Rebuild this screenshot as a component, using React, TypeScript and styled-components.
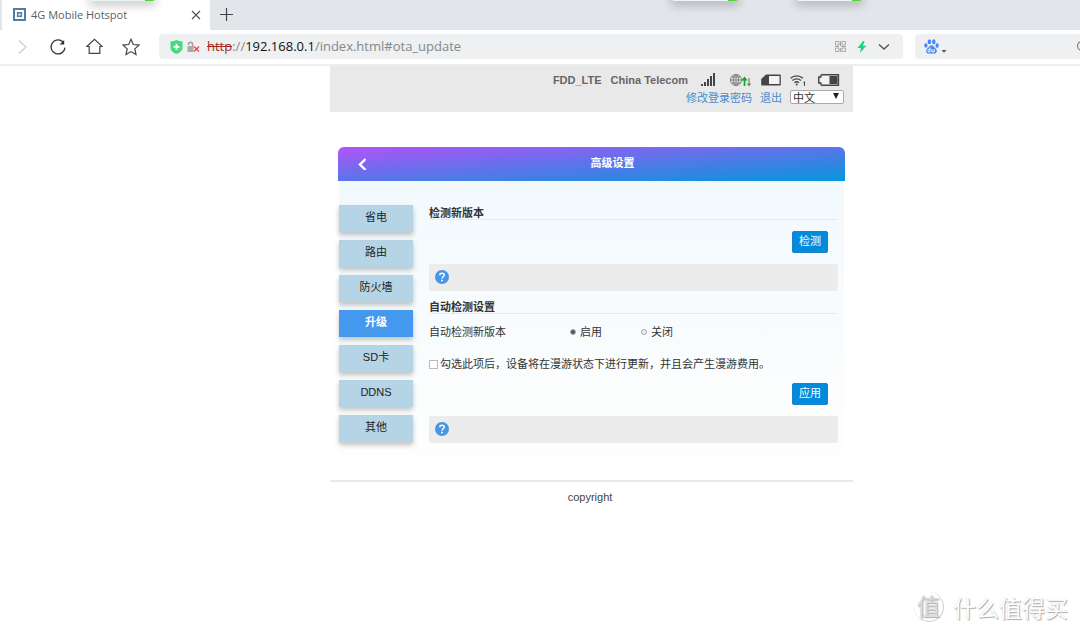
import React, { useState } from "react";
import styled, { createGlobalStyle } from "styled-components";

const Global = createGlobalStyle`
  * { box-sizing: border-box; }
  body {
    margin: 0;
    background: #fff;
    color: #333;
    font: 11px/15px "Liberation Sans", "Noto Sans CJK SC", sans-serif;
    overflow-x: hidden;
  }
  button, input, select { font: inherit; color: inherit; margin: 0; padding: 0; }
  button { cursor: pointer; }
  svg { display: block; flex: none; }
`;

const chromeFont = `"Open Sans", "Noto Sans", sans-serif`;

const Screen = styled.div`
  position: relative;
  min-height: 100vh;
  overflow: hidden;
`;

/* Browser chrome */
const TabStrip = styled.div`
  position: relative;
  display: flex;
  height: 30px;
  padding-left: 2px;
  background: #e2e6eb;
`;

const Tab = styled.div`
  display: flex;
  align-items: center;
  width: 208px;
  padding: 0 9px 1px 11px;
  background: #fff;
  font: 11px/16px ${chromeFont};
  color: #5a5f66;
`;

const TabTitle = styled.span`
  flex: 1;
  margin-left: 5px;
  white-space: nowrap;
`;

const IconButton = styled.button`
  display: flex;
  border: 0;
  background: none;
`;

const NewTab = styled(IconButton)`
  align-self: center;
  margin: 0 0 2px 10px;
`;

const Toast = styled.span<{ $left: number; $width: number }>`
  position: absolute;
  top: -6px;
  left: ${(p) => p.$left}px;
  width: ${(p) => p.$width}px;
  height: 7px;
  border-radius: 3px;
  background: linear-gradient(to left, #4fd432 10px, #e9f5fb 10px);
  box-shadow: 0 3px 10px 2px rgba(0, 0, 0, 0.2);
`;

const Toolbar = styled.div`
  display: flex;
  align-items: center;
  height: 36px;
  padding: 0 0 1px 16px;
  border-bottom: 2px solid #eeeeef;
  overflow: hidden;
`;

const NavButtons = styled.div`
  display: flex;
  align-items: center;
  gap: 19px;
  margin-right: 19px;
`;

const Field = styled.div`
  display: flex;
  align-items: center;
  height: 25px;
  border-radius: 4px;
  background: #eef0f2;
`;

const AddressBar = styled(Field)`
  flex: 1;
  padding: 0 13px 0 11px;
`;

const SecurityIcons = styled.span`
  display: flex;
  align-items: center;
  gap: 4px;
`;

const Url = styled.span`
  flex: 1;
  margin-left: 7px;
  padding-bottom: 1px;
  font: 13px/20px ${chromeFont};
  color: #85888c;
  white-space: nowrap;
  s { color: #a8281f; }
  b { font-weight: 400; color: #111; }
`;

const AddressTools = styled.div`
  display: flex;
  align-items: center;
  gap: 11px;
`;

const SearchBar = styled(Field)`
  flex: none;
  width: 176px;
  margin: 0 -11px 0 12px;
  padding: 0 2px 0 9px;
  justify-content: space-between;
`;

/* Router page */
const Viewport = styled.div`
  padding-left: 103px;
`;

const Page = styled.div`
  max-width: 523px;
  margin: 0 auto;
`;

const StatusBar = styled.header`
  height: 46px;
  padding: 5px 9px 0 0;
  background: #e9e9e9;
`;

const StatusRow = styled.div`
  display: flex;
  align-items: center;
  justify-content: flex-end;
  height: 18px;
  padding-right: 4px;
  font-weight: 700;
  color: #666;
`;

const StatusText = styled.span`
  margin-right: 9px;
`;

const StatusIcons = styled.span`
  display: flex;
  align-items: center;
  gap: 9px;
  margin-left: 4px;
`;

const LinkRow = styled.div`
  display: flex;
  align-items: center;
  justify-content: flex-end;
  height: 16px;
  gap: 8px;
`;

const Link = styled.a`
  padding-top: 2px;
  color: #4a8ccb;
  text-decoration: none;
`;

const SelectBox = styled.span`
  position: relative;
  display: flex;
  width: 54px;
  height: 14px;
`;

const Select = styled.select`
  appearance: none;
  width: 100%;
  padding: 1px 0 0 2px;
  border: 1px solid #aaa;
  border-radius: 2px;
  background: #fff;
  color: #333;
  line-height: 12px;
`;

const SelectArrow = styled.span`
  position: absolute;
  top: 3px;
  right: 5px;
  border: 3px solid transparent;
  border-top: 6px solid #222;
  border-bottom: 0;
  pointer-events: none;
`;

const Panel = styled.main`
  margin: 35px 8px 0;
`;

const PanelHeader = styled.div`
  display: grid;
  grid-template-columns: 42px 1fr;
  align-items: center;
  height: 34px;
  border-radius: 6px 6px 0 0;
  background: linear-gradient(to bottom right, #b153f8, #0397db);
  color: #fff;
`;

const BackButton = styled(IconButton)`
  margin-left: 19px;
`;

const PanelTitle = styled.h1`
  margin: 0;
  padding-bottom: 2px;
  font: inherit;
  font-weight: 700;
  text-align: center;
`;

const PanelBody = styled.div`
  display: flex;
  gap: 16px;
  margin: 0 1px;
  padding: 24px 6px 9px 0;
  background: linear-gradient(#f2f9fd, #fefefe);
`;

const SideNav = styled.nav`
  display: flex;
  flex-direction: column;
  gap: 8px;
  width: 74px;
`;

const NavItem = styled.button<{ $active: boolean }>`
  height: 27px;
  padding-bottom: 2px;
  border: 0;
  background: ${(p) => (p.$active ? "#4499ee" : "#b5d5e7")};
  color: ${(p) => (p.$active ? "#fff" : "#222")};
  font-weight: ${(p) => (p.$active ? 700 : 400)};
  box-shadow: 0 3px 5px rgba(0, 0, 0, 0.24);
`;

const Content = styled.div`
  flex: 1;
`;

const SectionTitle = styled.h2`
  height: 15px;
  margin: 0;
  border-bottom: 1px solid #e9ecee;
  font: inherit;
  font-weight: 700;
  line-height: 17px;
`;

const ActionRow = styled.div<{ $gap: number }>`
  display: flex;
  justify-content: flex-end;
  margin-top: ${(p) => p.$gap}px;
  padding-right: 10px;
`;

const ActionButton = styled.button`
  width: 36px;
  height: 22px;
  padding-bottom: 2px;
  border: 1px solid #1b7fc9;
  border-radius: 2px;
  background: #028bdc;
  color: #fff;
`;

const HelpBar = styled.div`
  display: flex;
  align-items: center;
  height: 27px;
  margin: 11px 0 8px;
  padding: 0 0 1px 6px;
  border-radius: 2px;
  background: #ececec;
`;

const OptionRow = styled.fieldset`
  display: grid;
  grid-template-columns: 141px 71px 1fr;
  align-items: center;
  margin: 8px 0 12px;
  padding: 0;
  border: 0;
  line-height: 20px;
`;

const Choice = styled.label<{ $gap: number }>`
  display: flex;
  align-items: center;
  gap: ${(p) => p.$gap}px;
  line-height: 20px;
  white-space: nowrap;
`;

const Radio = styled.input`
  appearance: none;
  width: 6px;
  height: 6px;
  border: 1px solid #aaa;
  border-radius: 50%;
  background: #eee;
  &:checked { background: #555; }
`;

const Checkbox = styled.input`
  appearance: none;
  width: 9px;
  height: 9px;
  border: 1px solid #bbb;
  background: #fff;
  &:checked { background: #4499ee; }
`;

const Footer = styled.footer`
  margin-top: 20px;
  padding: 8px 3px 0 0;
  border-top: 2px solid #e9e9e9;
  text-align: center;
  color: #444;
`;

const Watermark = styled.div`
  position: absolute;
  right: 12px;
  bottom: 11px;
  display: flex;
  align-items: center;
  gap: 9px;
  font: 23px/32px "Noto Sans CJK SC", sans-serif;
  color: #fff;
  text-shadow: 1px 1px 1px #aaa, 0 0 1px #ccc;
`;

const WatermarkBadge = styled.span`
  width: 30px;
  height: 30px;
  border-radius: 50%;
  border-right: 1px solid #ccc;
  border-bottom: 1px solid #ccc;
  line-height: 27px;
  text-align: center;
  color: #ddd;
`;

const Favicon = () => (
  <svg width="13" height="13" viewBox="0 0 13 13" fill="none" stroke="#557ba3">
    <path d="M1 1h11v11H1z" strokeWidth="2" />
    <path d="M4.7 4.7h3.6v3.6H4.7z" strokeWidth="1.6" />
  </svg>
);

const Line = ({ size, d, color = "#444", w = 1.2 }: { size: number; d: string; color?: string; w?: number }) => (
  <svg width={size} height={size} viewBox={`0 0 ${size} ${size}`} fill="none" stroke={color} strokeWidth={w}>
    <path d={d} />
  </svg>
);

const Reload = () => (
  <svg width="18" height="18" viewBox="0 0 18 18" fill="none" stroke="#333" strokeWidth="1.3">
    <path d="M14.2 4.2A7 7 0 1 0 16 9.6" />
    <path d="M15.2 2v4.6h-4.6z" fill="#333" stroke="none" />
  </svg>
);

const Shield = () => (
  <svg width="13" height="14" viewBox="0 0 13 14">
    <path d="M.5 1.5Q4 1.3 6.5 0 9 1.3 12.5 1.5V8q0 3.5-6 6-6-2.5-6-6z" fill="#42dc7d" />
    <path d="M6.5 3.8v6M3.5 6.8h6" stroke="#fff" strokeWidth="1.8" />
  </svg>
);

const Lock = () => (
  <svg width="13" height="12" viewBox="0 0 13 12">
    <path d="M1.5 4V3.3a2 2 0 0 1 4 0V5.5" fill="none" stroke="#999" strokeWidth="1.4" />
    <path d="M.5 5h6v6h-6z" fill="#aaa" />
    <path d="M7 5.5l5 5M12 5.5l-5 5" stroke="#e9413e" strokeWidth="1.2" />
  </svg>
);

const Qr = () => (
  <svg width="11" height="11" viewBox="0 0 11 11" fill="none" stroke="#aaa">
    <path d="M.5.5h3.5v3.5H.5zM7 .5h3.5v3.5H7zM.5 7h3.5v3.5H.5zM7 7h3.5v3.5H7zM5.5 0v5M0 5.5h4M6 5.5h5M5.5 7v4" />
  </svg>
);

const Bolt = () => (
  <svg width="10" height="12" viewBox="0 0 10 12">
    <path d="M6 0L.5 7H4L2.8 12 9.5 4.8H6L7.5 0z" fill="#16d87c" />
  </svg>
);

const Paw = () => (
  <svg width="24" height="16" viewBox="0 0 24 16" fill="#4a86f7">
    <ellipse cx="5.4" cy="2.7" rx="1.8" ry="2.5" />
    <ellipse cx="9.8" cy="2.7" rx="1.8" ry="2.5" />
    <ellipse cx="1.9" cy="6.5" rx="1.6" ry="2.3" />
    <ellipse cx="13.1" cy="6.5" rx="1.6" ry="2.3" />
    <path d="M7.5 6.2c2 0 2.3 1.6 4 3 1.8 1.5 2 5.3-1.3 5.3H4.8C1.5 14.5 1.7 10.7 3.5 9.2c1.7-1.4 2-3 4-3z" />
    <path d="M6 8.5v4.3H4.2q-.8-1.4.3-2.4H6M8 10v2.8h2.3V10" fill="none" stroke="#fff" />
    <path d="M17.5 11h5L20 13.8z" fill="#555" />
  </svg>
);

const Signal = () => (
  <svg width="20" height="14" viewBox="0 0 20 14" fill="#444">
    <path d="M0 11h2v2H0zM3 9h2v4H3zM6 6h2v7H6zM9 3h2v10H9zM12 0h2v13h-2z" />
  </svg>
);

const Globe = () => (
  <svg width="22" height="14" viewBox="0 0 22 14" fill="none">
    <g stroke="#777" strokeWidth=".9">
      <circle cx="6" cy="7" r="5.5" />
      <ellipse cx="6" cy="7" rx="2.6" ry="5.5" />
      <path d="M6 1.5v11M.5 7h11M1.5 4h9M1.5 10h9" />
    </g>
    <path d="M14.5 5v8M12.3 7.5l2.2-2.7 2.2 2.7" stroke="#12a82b" strokeWidth="1.7" />
    <path d="M19 5v7M17.3 10.5l1.7 2.2 1.7-2.2" stroke="#5a8a62" strokeWidth="1.1" />
  </svg>
);

const Sim = () => (
  <svg width="20" height="12" viewBox="0 0 20 12">
    <path d="M5 .5h14a.8.8 0 0 1 .8.8v9.4a.8.8 0 0 1-.8.8H1a.8.8 0 0 1-.8-.8V5z" fill="#444" />
    <path d="M8 2h10.5v8H8z" fill="#f3f3f3" />
  </svg>
);

const Wifi = () => (
  <svg width="19" height="13" viewBox="0 0 19 13" fill="none" stroke="#444" strokeWidth="1.3">
    <path d="M.6 4.3a9 9 0 0 1 12.3 0M2.5 6.6a6.3 6.3 0 0 1 8.5 0M4.5 8.7a3.5 3.5 0 0 1 4.5 0" />
    <circle cx="6.75" cy="10.4" r="1" fill="#444" stroke="none" />
    <path d="M13.5 8.5l1-.7V12" strokeWidth="1" />
  </svg>
);

const Battery = () => (
  <svg width="22" height="12" viewBox="0 0 22 12">
    <path d="M4 .8h16.400v10.400H4Q2.800 11.200 2.800 9H.8V3h2Q2.800.8 4 .8z" fill="#f3f3f3" stroke="#444" strokeWidth="1.5" />
    <path d="M11.5 2h8v8h-8z" fill="#444" />
  </svg>
);

const Help = () => (
  <svg width="14" height="14" viewBox="0 0 14 14" fill="none">
    <circle cx="7" cy="7" r="7" fill="#4796e5" />
    <path d="M4.8 5.3Q4.8 3.3 7 3.3t2.2 1.9Q9.2 6.3 8 6.9q-1 .5-1 1.6" stroke="#fff" strokeWidth="1.5" />
    <circle cx="7" cy="10.5" r="1" fill="#fff" />
  </svg>
);

const menu = ["省电", "路由", "防火墙", "升级", "SD卡", "DDNS", "其他"];

export default function App() {
  const [active, setActive] = useState("升级");
  return (
    <Screen>
      <Global />
      <TabStrip>
        <Tab>
          <Favicon />
          <TabTitle>4G Mobile Hotspot</TabTitle>
          <IconButton aria-label="Close tab"><Line size={10} d="M1 1l8 8M9 1l-8 8" color="#555" /></IconButton>
        </Tab>
        <NewTab aria-label="New tab"><Line size={13} d="M6.5 0v13M0 6.5h13" /></NewTab>
        <Toast $left={90} $width={65} />
        <Toast $left={672} $width={66} />
        <Toast $left={797} $width={65} />
      </TabStrip>
      <Toolbar>
        <NavButtons>
          <IconButton aria-label="Forward"><Line size={14} d="M3 .5L10 7l-7 6.5" color="#ccc" /></IconButton>
          <IconButton aria-label="Reload"><Reload /></IconButton>
          <IconButton aria-label="Home"><Line size={17} d="M.8 8.5L8.5 1.3l7.7 7.2H13.8V15.3H3.2V8.5z" /></IconButton>
          <IconButton aria-label="Bookmark"><Line size={18} d="M9 1.3l2.3 5.2 5.7.6-4.2 3.8 1.2 5.6-5-2.9-5 2.9 1.2-5.6L1 7.1l5.7-.6z" /></IconButton>
        </NavButtons>
        <AddressBar>
          <SecurityIcons><Shield /><Lock /></SecurityIcons>
          <Url><s>http</s>://<b>192.168.0.1</b>/index.html#ota_update</Url>
          <AddressTools>
            <Qr />
            <Bolt />
            <IconButton aria-label="History"><Line size={12} d="M1 3.5l5 4.5 5-4.5" color="#555" w={1.4} /></IconButton>
          </AddressTools>
        </AddressBar>
        <SearchBar>
          <IconButton aria-label="Search engine"><Paw /></IconButton>
          <IconButton aria-label="Search"><Line size={13} d="M6 1.5a4.5 4.5 0 1 0 .1 0M9 9l3 3" color="#888" /></IconButton>
        </SearchBar>
      </Toolbar>
      <Viewport>
        <Page>
          <StatusBar>
            <StatusRow>
              <StatusText>FDD_LTE</StatusText>
              <StatusText>China Telecom</StatusText>
              <StatusIcons>
                <Signal />
                <Globe />
                <Sim />
                <Wifi />
                <Battery />
              </StatusIcons>
            </StatusRow>
            <LinkRow>
              <Link href="#password">修改登录密码</Link>
              <Link href="#logout">退出</Link>
              <SelectBox>
                <Select aria-label="语言" defaultValue="zh"><option value="zh">中文</option></Select>
                <SelectArrow />
              </SelectBox>
            </LinkRow>
          </StatusBar>
          <Panel>
            <PanelHeader>
              <BackButton aria-label="返回"><Line size={12} d="M8.5 1L3 6.5 8.5 12" color="#fff" w={2.4} /></BackButton>
              <PanelTitle>高级设置</PanelTitle>
            </PanelHeader>
            <PanelBody>
              <SideNav>
                {menu.map((item) => (
                  <NavItem key={item} $active={item === active} onClick={() => setActive(item)}>{item}</NavItem>
                ))}
              </SideNav>
              <Content>
                <SectionTitle>检测新版本</SectionTitle>
                <ActionRow $gap={11}><ActionButton>检测</ActionButton></ActionRow>
                <HelpBar><Help /></HelpBar>
                <SectionTitle>自动检测设置</SectionTitle>
                <OptionRow aria-label="自动检测新版本">
                  <span>自动检测新版本</span>
                  <Choice $gap={4}><Radio type="radio" name="auto" defaultChecked />启用</Choice>
                  <Choice $gap={4}><Radio type="radio" name="auto" />关闭</Choice>
                </OptionRow>
                <Choice $gap={2}><Checkbox type="checkbox" />勾选此项后，设备将在漫游状态下进行更新，并且会产生漫游费用。</Choice>
                <ActionRow $gap={9}><ActionButton>应用</ActionButton></ActionRow>
                <HelpBar><Help /></HelpBar>
              </Content>
            </PanelBody>
          </Panel>
          <Footer>copyright</Footer>
        </Page>
      </Viewport>
      <Watermark><WatermarkBadge>值</WatermarkBadge>什么值得买</Watermark>
    </Screen>
  );
}
